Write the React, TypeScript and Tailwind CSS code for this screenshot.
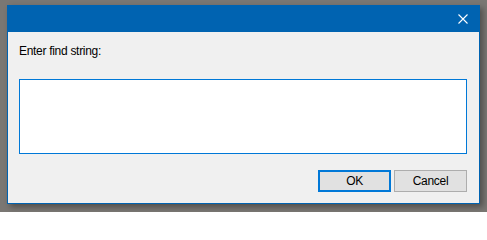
import React from "react"

function CloseIcon() {
  return (
    <svg width="10" height="10" viewBox="0 0 10 10" fill="none">
      <path d="M0.5 0.5L9.5 9.5M9.5 0.5L0.5 9.5" stroke="#ffffff" strokeWidth="1.1" />
    </svg>
  )
}

export default function App() {
  return (
    <div className="w-[487px] h-[212px] bg-[#7a7773] pt-[5px] pl-[7px] font-['Liberation_Sans',Arial,sans-serif]">
      <div className="w-[473px] h-[199px] border border-[#0063b1] bg-[#f0f0f0] flex flex-col shadow-[3px_3px_6px_rgba(0,0,0,0.35)]">
        {/* Title bar */}
        <div className="h-[26px] bg-[#0063b1] flex items-center justify-end pr-[11px] shrink-0">
          <CloseIcon />
        </div>

        <div className="flex flex-col px-[11px]">
          <label className="mt-[11px] text-[12px] leading-[16px] tracking-[-0.3px] text-[#000000]">
            Enter find string:
          </label>

          <textarea
            className="mt-[20px] h-[75px] w-[448px] resize-none border border-[#0078d7] bg-white outline-none"
            defaultValue=""
          />

          <div className="mt-[16px] flex justify-end gap-[3px] w-[448px]">
            <button className="w-[73px] h-[22px] border-2 border-[#0078d7] bg-[#e1e1e1] text-[12px] tracking-[-0.3px] text-black">
              OK
            </button>
            <button className="w-[73px] h-[22px] border border-[#adadad] bg-[#e1e1e1] text-[12px] tracking-[-0.3px] text-black">
              Cancel
            </button>
          </div>
        </div>
      </div>
    </div>
  )
}
